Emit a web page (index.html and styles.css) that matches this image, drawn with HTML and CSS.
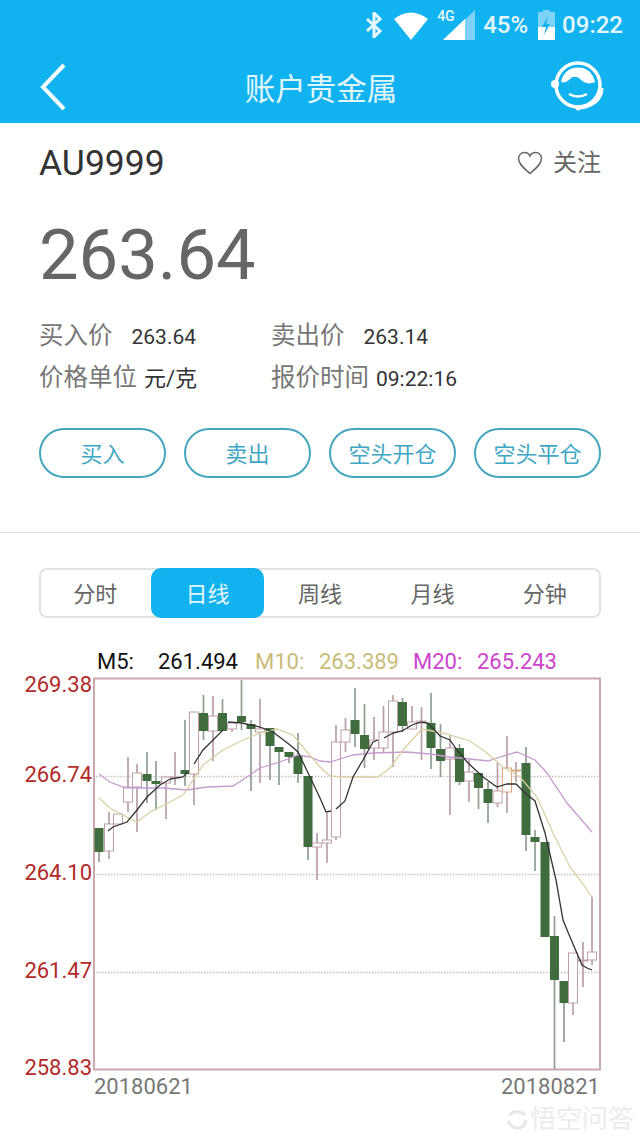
FILE: index.html
```html
<!DOCTYPE html>
<html lang="zh-CN">
<head>
  <meta charset="UTF-8" />
  <meta name="viewport" content="width=device-width, initial-scale=1.0" />
  <title>账户贵金属</title>
  <link rel="stylesheet" href="styles.css">
</head>
<body>

  <header class="top">
    <div class="statusbar">
      <svg class="st-bt" width="18" height="26" viewBox="0 0 18 26">
        <path d="M2 7l13 12-6 6V1l6 6L2 19" fill="none" stroke="#e8f8fe" stroke-width="3"/>
      </svg>
      <svg class="st-wifi" width="34" height="29" viewBox="0 0 34 29">
        <path d="M0 8Q17-5 34 8L17 29z" fill="#fff"/>
      </svg>
      <div class="st-signal">
        <span class="st-4g">4G</span>
        <svg width="32" height="30" viewBox="0 0 32 30">
          <path d="M32 0V30H0z" fill="#7fd2f7"/>
          <path d="M22 9V30H0z" fill="#fff"/>
        </svg>
      </div>
      <span class="st-text st-pct">45%</span>
      <svg class="st-batt" width="17" height="30" viewBox="0 0 17 30">
        <path d="M5 0h7v2h5v28H0V2h5z" fill="#7fd2f7"/>
        <path d="M0 17h17v13H0z" fill="#fff"/>
        <path d="M10 6L4 17h4l-2 8 6-11H8z" fill="#10b2f0"/>
      </svg>
      <span class="st-text st-time">09:22</span>
    </div>
    <nav class="navbar">
      <svg width="28" height="48" viewBox="0 0 28 48">
        <path d="M25 2L4 24l21 22" fill="none" stroke="#f2fbff" stroke-width="4"/>
      </svg>
      <h1 class="title">账户贵金属</h1>
      <svg class="support" width="54" height="52" viewBox="0 0 54 52">
        <circle cx="27" cy="24" r="22" fill="none" stroke="#fff" stroke-width="3.5"/>
        <circle cx="4" cy="23" r="4" fill="#fff"/>
        <path d="M10 21C12 11 19 6.500 27 6.500S42 11 44 21c-6 3-11 1-15-3-3-3-7-3-10 0-3 3-6 4-9 3z" fill="#fff"/>
        <path d="M18 33q9 5 18 0" fill="none" stroke="#fff" stroke-width="2.500"/>
        <path d="M51 27c0 11-9 19-22 20" fill="none" stroke="#fff" stroke-width="3"/>
        <circle cx="27" cy="47" r="2.500" fill="#fff"/>
      </svg>
    </nav>
  </header>

  <section class="quote">
    <div class="quote-head">
      <span class="code">AU9999</span>
      <span class="follow">
        <svg width="26" height="24" viewBox="0 0 26 24">
          <path d="M13 22.500C8 18 1.500 13.500 1.500 7.500 1.500 4 4.200 1.500 7.300 1.500 9.700 1.500 12 2.800 13 5c1-2.200 3.300-3.500 5.700-3.500 3.100 0 5.800 2.500 5.800 6 0 6-6.500 10.500-11.500 15z" fill="none" stroke="#666" stroke-width="1.500"/>
        </svg>
        <span class="follow-text">关注</span>
      </span>
    </div>

    <div class="price">263.64</div>

    <div class="info">
      <div class="info-item"><span class="label wide">买入价</span><span class="val">263.64</span></div>
      <div class="info-item"><span class="label wide">卖出价</span><span class="val">263.14</span></div>
      <div class="info-item"><span class="label">价格单位</span><span class="val unit">元/克</span></div>
      <div class="info-item"><span class="label">报价时间</span><span class="val">09:22:16</span></div>
    </div>

    <div class="actions">
      <button class="btn">买入</button>
      <button class="btn">卖出</button>
      <button class="btn">空头开仓</button>
      <button class="btn">空头平仓</button>
    </div>
  </section>

  <section class="market">
    <div class="tabs">
      <span class="tab">分时</span>
      <span class="tab active">日线</span>
      <span class="tab">周线</span>
      <span class="tab">月线</span>
      <span class="tab">分钟</span>
    </div>

    <div class="legend">
      <span class="ma ma5"><span class="ma-name">M5:</span>261.494</span>
      <span class="ma ma10"><span class="ma-name">M10:</span>263.389</span>
      <span class="ma ma20"><span class="ma-name">M20:</span>265.243</span>
    </div>

    <!-- viewBox uses page coordinates so the candles are easy to check against the screenshot -->
    <svg class="chart" width="640" height="432" viewBox="0 670 640 432">
      <rect class="frame" x="94" y="678.500" width="506" height="391"/>
      <path class="grid" d="M96 776.500H598M96 874.500H598M96 972.500H598"/>

      <path class="wick-down" d="M99 828V862M147 752V803M156 761V810M185 720V786M203.500 695V740M222.500 699V731M241.500 680V730M251 720V791M270 728V780M279 747V785M289 752V763M298 733V783M308 776V860M355 688V747M364.500 704V768M402.500 698V732M431 693V769M440.500 724V777M459.500 744V785M478.500 773V809M488 782V823M526 747V851M535 830V871M545 842V937M554.500 916V1069M564 981V1042"/>
      <path class="wick-up" d="M109 812V859M128 757V812M137 764V832M166 776V819M175 752V785M194 712V805M213 696V761M232 722V732M260 699V783M317 833V880M327 813V863M336 725V840M345.500 718V752M374 717V760M383.500 706V752M393 695V767M412 706V729M421.500 707V760M450 735V815M469 760V802M497.500 763V807M507 736V813M516 762V782M573 953V1015M583 942V987M592 897V965"/>

      <path class="body-down" d="M99 828V852M147 774V781M156 781V784M185 770V774M203.500 713V731M222.500 713V731M241.500 716V722M251 724V729M270 728V746M279 747V752M289 752V757M298 756V774M308 776V847M355 720V734M364.500 735V749M402.500 702V726M431 723V748M440.500 749V761M459.500 748V782M478.500 773V788M488 789V803M526 763V835M535 837V842M545 842V937M554.500 936V980M564 981V1003"/>

      <g class="body-up">
        <rect x="104.500" y="824" width="9" height="27"/>
        <rect x="113.500" y="814" width="9" height="10"/>
        <rect x="123.500" y="788" width="9" height="14"/>
        <rect x="132.500" y="773" width="9" height="14"/>
        <rect x="161.500" y="777" width="9" height="6"/>
        <rect x="170.500" y="777" width="9" height="1"/>
        <rect x="189.500" y="712" width="9" height="62"/>
        <rect x="208.500" y="716" width="9" height="15"/>
        <rect x="227.500" y="723" width="9" height="6"/>
        <rect x="255.500" y="729" width="9" height="3"/>
        <rect x="312.500" y="843" width="9" height="4"/>
        <rect x="322.500" y="840" width="9" height="3"/>
        <rect x="331.500" y="742" width="9" height="95"/>
        <rect x="341" y="730" width="9" height="12"/>
        <rect x="369.500" y="740" width="9" height="8"/>
        <rect x="379" y="732" width="9" height="16"/>
        <rect x="388.500" y="701" width="9" height="31"/>
        <rect x="407.500" y="722" width="9" height="7"/>
        <rect x="417" y="721" width="9" height="2"/>
        <rect x="445.500" y="748" width="9" height="11"/>
        <rect x="464.500" y="772" width="9" height="9"/>
        <rect x="493" y="791" width="9" height="12"/>
        <rect class="orange" x="502.500" y="768" width="9" height="24"/>
        <rect class="orange" x="511.500" y="770" width="9" height="1"/>
        <rect x="568.500" y="953" width="9" height="50"/>
        <rect x="578.500" y="960" width="9" height="1"/>
        <rect x="587.500" y="952" width="9" height="8"/>
      </g>

      <polyline class="line l20" points="99,774 110,782 123,787 140,788 163,788 187,790 207,787 233,786 247,777 260,768 280,762 298,755 310,757 320,761 330,762 340,759 353,755 373,753 407,752 430,754 450,757 470,759 488,761 503,756 517,752 535,760 547,773 567,803 592,832"/>
      <polyline class="line l10" points="99,798 110,808 123,815 137,822 150,812 170,802 183,795 193,780 203,765 223,750 243,740 260,733 277,729 293,735 307,752 320,767 330,776 345,777 378,777 390,768 403,750 422,729 443,733 470,741 487,753 503,767 520,777 537,797 553,833 570,867 580,880 592,897"/>
      <path class="line l5" d="M108 831L113 827 127 822 137 810 147 797 160 785 170 779 183 777 188 772M194 764L203 750 213 740 223 730M228 722L242 723 260 727 273 732 290 745 298 752 310 777 320 798 326 812 331 811M336 809L345 801 353 777 363 760 373 742 378 740M384 738L393 733 402 731 412 725 421 722 428 723 440 736 450 740 457 750 468 763 483 777 497 787 507 784 516 784 525 793 535 801 545 833 556 880 563 920 570 937 582 965 587 968 592 970"/>

      <text class="axis" x="92" y="692">269.38</text>
      <text class="axis" x="92" y="782">266.74</text>
      <text class="axis" x="92" y="880">264.10</text>
      <text class="axis" x="92" y="978">261.47</text>
      <text class="axis" x="92" y="1075">258.83</text>
      <text class="date" x="94" y="1094">20180621</text>
      <text class="date" x="501" y="1094">20180821</text>
    </svg>

    <div class="mark">
      <svg width="22" height="24" viewBox="0 0 22 24">
        <path d="M3 8Q11 1 19 8M2 14Q6 22 13 21 19 20 20 13" fill="none" stroke="#e6e6e6" stroke-width="3"/>
      </svg>
      悟空问答
    </div>
  </section>

</body>
</html>
```

FILE: styles.css
```css
body {
  font-family: Roboto, "Noto Sans CJK SC", sans-serif;
  background: #fff;
  margin: 0;
  padding: 0;
  overflow: hidden;
}

.top {
  background-color: #10b2f0;
  height: 123px;
}

.statusbar {
  height: 50px;
  display: flex;
  align-items: center;
  justify-content: flex-end;
  padding: 0 17px 0 0;
}

.st-bt { margin-right: 11px; }
.st-wifi { margin-right: 15px; }
.st-signal {
  position: relative;
  width: 32px;
  height: 30px;
  margin-right: 8px;
}
.st-4g {
  position: absolute;
  left: -6px;
  top: -2px;
  font-size: 14px;
  font-weight: 500;
  color: #e8f8fe;
  z-index: 1;
}
.st-text {
  font-size: 24px;
  font-weight: 500;
  color: #e4f6fd;
}
.st-pct { margin-right: 10px; }
.st-batt { margin-right: 7px; }

.navbar {
  height: 73px;
  display: grid;
  grid-template-columns: 64px 1fr 64px;
  align-items: center;
  padding: 0 37px 0 39px;
}
.support {
  justify-self: end;
  margin-right: -2px;
}

.title {
  margin: 0;
  text-align: center;
  color: #e4f6fd;
  font-size: 30.500px;
  font-weight: 400;
}

.quote { padding: 0 39px; }

.quote-head {
  display: flex;
  justify-content: space-between;
  align-items: center;
  height: 40px;
  padding-top: 20px;
}
.code {
  font-size: 35.500px;
  color: #333;
}
.follow {
  display: flex;
  align-items: center;
  gap: 10px;
  font-size: 24px;
  color: #666;
}
.follow-text { margin-top: -5px; }

.price {
  font-size: 70.500px;
  line-height: 80px;
  margin-top: 32px;
  color: #666;
}

.info {
  display: grid;
  grid-template-columns: 232px 1fr;
  margin-top: 21px;
}
.info-item {
  display: flex;
  align-items: baseline;
  height: 42px;
  line-height: 40px;
}
.label {
  font-size: 24.500px;
  color: #777;
}
.label.wide { margin-right: 19px; }
.val {
  font-size: 21px;
  color: #333;
  margin-left: 7px;
}
.label.wide + .val { margin-left: 0; }
.unit { font-size: 22px; }

.actions {
  display: flex;
  justify-content: space-between;
  margin-top: 28px;
  padding-bottom: 54px;
  margin-left: -39px;
  margin-right: -39px;
  padding-left: 39px;
  padding-right: 39px;
  border-bottom: 1px solid #ddd;
}
.btn {
  width: 127px;
  height: 50px;
  box-sizing: border-box;
  background: #fff;
  border: 2px solid #45a6bf;
  border-radius: 25px;
  color: #3fa7c4;
  font-family: inherit;
  font-size: 22px;
  padding: 0 0 2px;
}

.tabs {
  display: flex;
  height: 50px;
  margin: 35px 39px 0;
  box-shadow: inset 0 0 0 2px #e2e2e2;
  border-radius: 8px;
}
.tab {
  flex: 1;
  display: flex;
  align-items: center;
  justify-content: center;
  font-size: 22px;
  color: #666;
  padding-bottom: 3px;
}
.tab.active {
  background: #10b2f0;
  color: #e4f6fd;
  border-radius: 10px;
}

.legend {
  display: flex;
  margin-top: 29px;
  padding-left: 97px;
  height: 23px;
  line-height: 30px;
  font-size: 22px;
}
.ma {
  width: 158px;
  white-space: nowrap;
}
.ma-name {
  display: inline-block;
  width: 64px;
}
.ma5 { color: #111; }
.ma5 .ma-name { width: 61px; }
.ma10 { color: #c9bc78; }
.ma20 { color: #cc44cc; }

.chart { display: block; }

.frame {
  fill: #fff;
  stroke: #c9a9ae;
  stroke-width: 2;
}
.grid {
  fill: none;
  stroke: #cdbfc0;
  stroke-width: 1.500;
  stroke-dasharray: 1.500 1.500;
}
.wick-down {
  fill: none;
  stroke: #8f9e91;
  stroke-width: 1.700;
}
.wick-up {
  fill: none;
  stroke: #b9a0a8;
  stroke-width: 1.700;
}
.body-down {
  fill: none;
  stroke: #3f6d3e;
  stroke-width: 9;
}
.body-up rect {
  fill: #fff;
  stroke: #bfa0a8;
  stroke-width: 1;
}
.body-up rect.orange { stroke: #d9a77f; }

.line {
  fill: none;
  stroke-width: 1.300;
}
.l5 { stroke: #333; }
.l10 { stroke: #dccfa4; }
.l20 { stroke: #c79ad0; }

.axis {
  font-size: 22px;
  fill: #b22a2a;
  text-anchor: end;
}
.date {
  font-size: 22px;
  fill: #777;
}

.mark {
  display: flex;
  align-items: center;
  justify-content: flex-end;
  gap: 2px;
  padding: 2px 6px 0 0;
  font-size: 26px;
  line-height: 30px;
  color: #ececec;
}
```
